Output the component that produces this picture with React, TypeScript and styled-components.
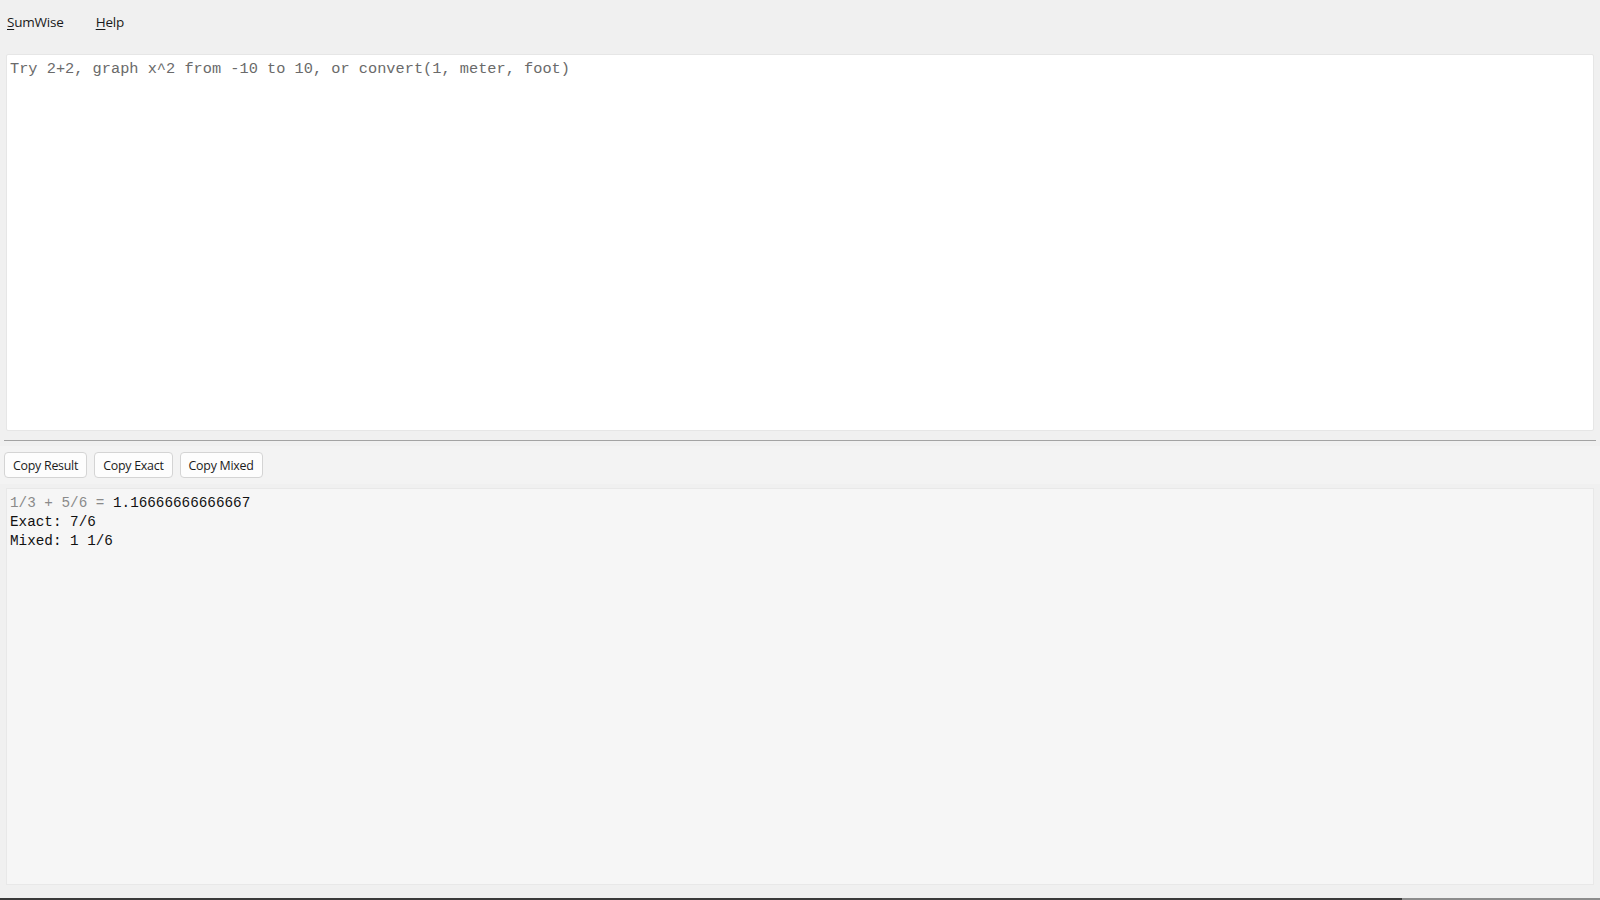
import React from "react";
import styled, { createGlobalStyle } from "styled-components";

const Global = createGlobalStyle`
  html, body { margin: 0; padding: 0; background: #f0f0f0; }
  body { width: 1600px; height: 900px; overflow: hidden; }
  #root { height: 900px; }
`;

const Shell = styled.div`
  height: 900px;
  display: flex;
  flex-direction: column;
  background: #f0f0f0;
  font-family: "Open Sans", "Noto Sans", sans-serif;
`;

const MenuBar = styled.div`
  height: 44px;
  display: flex;
  align-items: center;
  gap: 32px;
  padding-left: 7px;
  font-size: 13.5px;
  color: #1a1a1a;
`;

const MenuItem = styled.span`
  cursor: default;
  letter-spacing: -0.2px;
  u { text-decoration: underline; text-underline-offset: 2px; }
`;

const EditorWrap = styled.div`
  padding: 10px 6px 0 6px;
`;

const Editor = styled.textarea`
  display: block;
  box-sizing: border-box;
  width: 100%;
  height: 377px;
  margin: 0;
  padding: 5px 3px;
  border: 1px solid #e6e6e6;
  border-radius: 2px;
  background: #ffffff;
  resize: none;
  outline: none;
  font-family: "Liberation Mono", "DejaVu Sans Mono", monospace;
  font-size: 15.3px;
  line-height: 19px;
  color: #222;
  &::placeholder { color: #6a6a6a; }
`;

const Separator = styled.div`
  height: 1px;
  margin: 9px 4px 0 4px;
  background: #a3a3a3;
`;

const Toolbar = styled.div`
  margin-top: 5px;
  height: 38px;
  display: flex;
  align-items: center;
  gap: 7px;
  padding: 0 4px;
  background: #f3f3f3;
`;

const ToolButton = styled.button`
  box-sizing: border-box;
  height: 26px;
  padding: 0 8px;
  border: 1px solid #d4d4d4;
  border-radius: 4px;
  background: #fdfdfd;
  font-family: "Open Sans", "Noto Sans", sans-serif;
  font-size: 12.4px;
  letter-spacing: -0.25px;
  color: #1b1b1b;
  cursor: default;
`;

const OutputWrap = styled.div`
  padding: 4px 6px 0 6px;
`;

const Output = styled.div`
  box-sizing: border-box;
  height: 397px;
  padding: 5px 3px;
  border: 1px solid #e8e8e8;
  background: #f6f6f6;
  font-family: "Liberation Mono", "DejaVu Sans Mono", monospace;
  font-size: 14.3px;
  line-height: 19px;
  color: #111;
`;

const Line = styled.div`
  white-space: pre;
`;

const Dim = styled.span`
  color: #8a8a8a;
`;

const Spacer = styled.div`
  flex: 1;
`;

const BottomBar = styled.div`
  height: 2px;
  display: flex;
`;

const BarSeg = styled.div<{ $dark?: boolean; $w?: string }>`
  width: ${(p) => p.$w ?? "auto"};
  flex: ${(p) => (p.$w ? "none" : "1")};
  background: ${(p) => (p.$dark ? "#3a3a3a" : "#8c8c8c")};
`;

export default function App() {
  return (
    <Shell>
      <Global />
      <MenuBar>
        <MenuItem>
          <u>S</u>umWise
        </MenuItem>
        <MenuItem>
          <u>H</u>elp
        </MenuItem>
      </MenuBar>
      <EditorWrap>
        <Editor
          spellCheck={false}
          placeholder="Try 2+2, graph x^2 from -10 to 10, or convert(1, meter, foot)"
        />
      </EditorWrap>
      <Separator />
      <Toolbar>
        <ToolButton>Copy Result</ToolButton>
        <ToolButton>Copy Exact</ToolButton>
        <ToolButton>Copy Mixed</ToolButton>
      </Toolbar>
      <OutputWrap>
        <Output>
          <Line>
            <Dim>1/3 + 5/6 = </Dim>1.16666666666667
          </Line>
          <Line>Exact: 7/6</Line>
          <Line>Mixed: 1 1/6</Line>
        </Output>
      </OutputWrap>
      <Spacer />
      <BottomBar>
        <BarSeg $dark $w="1402px" />
        <BarSeg />
      </BottomBar>
    </Shell>
  );
}
